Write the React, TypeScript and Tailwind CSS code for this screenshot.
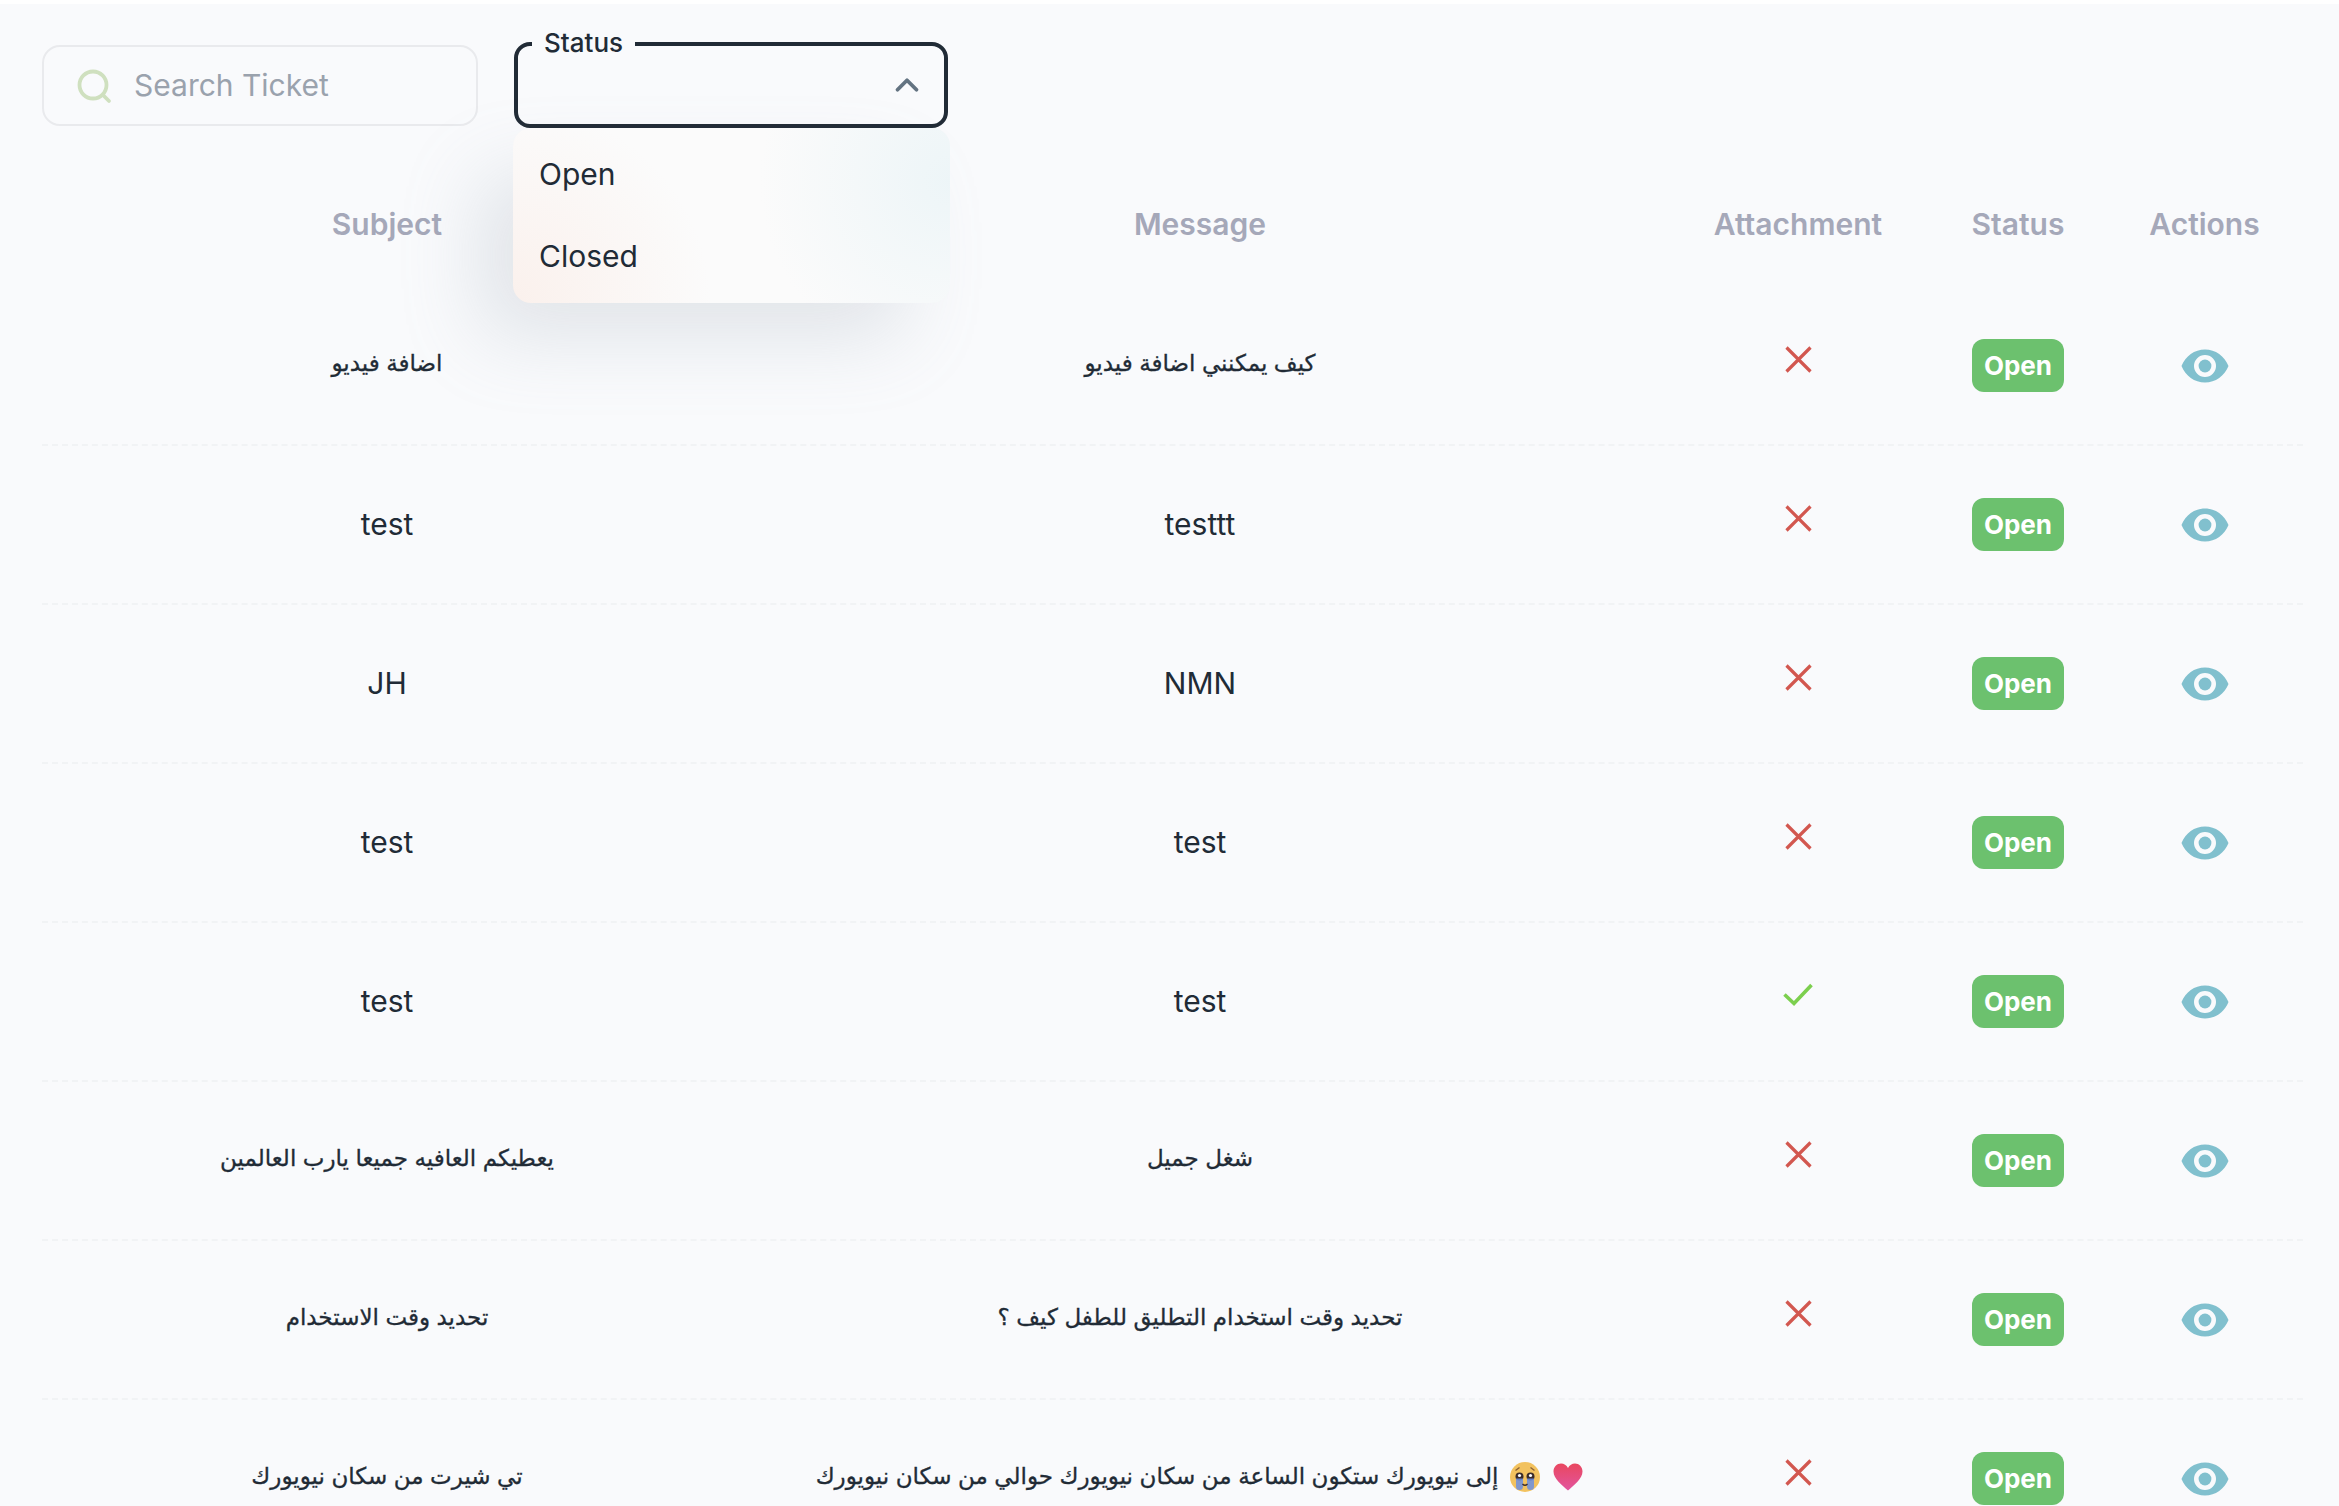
import { ChevronUp } from 'lucide-react'

type Ticket = {
  subject: string
  message: string
  attachment: boolean
  emoji?: boolean
}

const tickets: Ticket[] = [
  { subject: 'اضافة فيديو', message: 'كيف يمكنني اضافة فيديو', attachment: false },
  { subject: 'test', message: 'testtt', attachment: false },
  { subject: 'JH', message: 'NMN', attachment: false },
  { subject: 'test', message: 'test', attachment: false },
  { subject: 'test', message: 'test', attachment: true },
  { subject: 'يعطيكم العافيه جميعا يارب العالمين', message: 'شغل جميل', attachment: false },
  { subject: 'تحديد وقت الاستخدام', message: 'تحديد وقت استخدام التطليق للطفل كيف ؟', attachment: false },
  {
    subject: 'تي شيرت من سكان نيويورك',
    message: 'إلى نيويورك ستكون الساعة من سكان نيويورك حوالي من سكان نيويورك',
    attachment: false,
    emoji: true,
  },
]

// only DejaVu has arabic here and it runs wide, so arabic cells get a smaller size
const cellText = (text: string) =>
  /[\u0600-\u06FF]/.test(text)
    ? 'text-[23px] whitespace-nowrap -mt-[4px] [-webkit-text-stroke:0.3px_#212b36]'
    : 'text-[30px]'

function SearchIcon() {
  return (
    <svg width="36" height="36" viewBox="0 0 36 36" fill="none" className="shrink-0">
      <circle cx="17" cy="17" r="13.5" stroke="#cfe0bf" strokeWidth="3.8" />
      <path d="M27 27l6 6" stroke="#cfe0bf" strokeWidth="3.8" strokeLinecap="round" />
    </svg>
  )
}

function CrossIcon() {
  return (
    <svg width="27" height="27" viewBox="0 0 27 27" fill="none">
      <path d="M1.5 1.5l24 24M25.5 1.5l-24 24" stroke="#d2574f" strokeWidth="3.2" />
    </svg>
  )
}

function CheckIcon() {
  return (
    <svg width="30" height="24" viewBox="0 0 30 24" fill="none">
      <path d="M1.5 11.5l9.5 9L28.5 2" stroke="#7ccf4e" strokeWidth="3.6" />
    </svg>
  )
}

function EyeIcon() {
  return (
    <svg width="48" height="34" viewBox="0 0 48 34">
      <path
        fillRule="evenodd"
        fill="#81c0ce"
        d="M0.5 17C4.5 7 13.5 0.5 24 0.5S43.5 7 47.5 17C43.5 27 34.5 33.5 24 33.5S4.5 27 0.5 17ZM24 6a11 11 0 1 0 0 22a11 11 0 0 0 0-22Z"
      />
      <circle cx="24" cy="17" r="6.4" fill="#81c0ce" />
    </svg>
  )
}

function HeartEmoji() {
  return (
    <svg width="30" height="28" viewBox="0 0 30 28" className="inline-block align-[-7px] mx-[1px]">
      <defs>
        <linearGradient id="heartFill" x1="0" y1="0" x2="0" y2="1">
          <stop offset="0" stopColor="#e9475f" />
          <stop offset="1" stopColor="#e2559f" />
        </linearGradient>
      </defs>
      <path
        fill="url(#heartFill)"
        d="M15 27.5C9 22 0.5 16 0.5 8.500C0.500 3.800 4 0.500 8 0.500C11 0.500 13.500 2 15 5C16.500 2 19 0.500 22 0.500C26 0.500 29.500 3.800 29.500 8.500C29.500 16 21 22 15 27.5Z"
      />
    </svg>
  )
}

function CryingFaceEmoji() {
  return (
    <svg width="30" height="30" viewBox="0 0 30 30" className="inline-block align-[-8px] mx-[12px]">
      <circle cx="15" cy="15" r="15" fill="#f2c25f" />
      <circle cx="9.500" cy="14.500" r="4" fill="#3a2c2a" />
      <circle cx="20.500" cy="14.500" r="4" fill="#3a2c2a" />
      <circle cx="9.500" cy="13.500" r="1.600" fill="#fff" />
      <circle cx="20.500" cy="13.500" r="1.600" fill="#fff" />
      <path d="M6 16.500h7v8a3.500 3.500 0 0 1-7 0ZM17 16.500h7v8a3.500 3.500 0 0 1-7 0Z" fill="#6c8fe0" opacity="0.85" />
      <path d="M12.500 22c1.500 1.500 3.500 1.500 5 0" stroke="#3a2c2a" strokeWidth="1.400" fill="none" />
      <path d="M5.500 8.500l4-3M24.500 8.500l-4-3" stroke="#8c6239" strokeWidth="1.400" fill="none" />
    </svg>
  )
}

function TicketRow({ ticket }: { ticket: Ticket }) {
  return (
    <div className="grid grid-cols-[690px_936px_260px_180px_193px] h-[159px] items-center text-center border-b-2 border-dashed border-[#f1f3f5] text-[#212b36]">
      <div dir="auto" className={cellText(ticket.subject)}>{ticket.subject}</div>
      <div dir={ticket.emoji ? 'rtl' : 'auto'} className={cellText(ticket.message)}>
        {ticket.emoji && (
          <>
            <HeartEmoji />
            <CryingFaceEmoji />
          </>
        )}
        {ticket.message}
      </div>
      <div className="flex justify-center mb-[13px]">
        {ticket.attachment ? <CheckIcon /> : <CrossIcon />}
      </div>
      <div className="flex justify-center">
        <span className="w-[92px] h-[53px] rounded-[12px] bg-[#6cc16e] text-white text-[26px] font-bold flex items-center justify-center">
          Open
        </span>
      </div>
      <div className="flex justify-center">
        <EyeIcon />
      </div>
    </div>
  )
}

export default function App() {
  return (
    <div className="h-[1506px] overflow-hidden bg-white pt-[4px] font-['Inter','Liberation_Sans','DejaVu_Sans',sans-serif]">
      <div className="h-full bg-[#f9fafc] pl-[42px] pr-[36px] pt-[38px]">
        {/* Filters */}
        <div className="flex items-start gap-[36px] h-[86px]">
          <div className="w-[436px] h-[81px] mt-[3px] flex items-center gap-[22px] px-[32px] rounded-[18px] border-2 border-[#e9eaed]">
            <SearchIcon />
            <span className="text-[30px] text-[#9aa2ad]">Search Ticket</span>
          </div>

          <div className="relative w-[434px] h-[86px] rounded-[16px] border-4 border-[#212b36] flex items-center justify-end pr-[18px]">
            <span className="absolute -top-[19px] left-[14px] px-[12px] bg-[#f9fafc] text-[26px] leading-[32px] font-medium text-[#212b36]">
              Status
            </span>
            <ChevronUp size={38} strokeWidth={2.4} className="text-[#637381]" />

            {/* Open dropdown */}
            <div className="absolute top-[82px] -left-[5px] w-[437px] h-[175px] pt-[5px] rounded-[18px] z-10 bg-[#fbfbfb] bg-[radial-gradient(circle_at_100%_30%,rgba(220,238,243,0.45),transparent_42%),radial-gradient(circle_at_0%_100%,rgba(250,232,224,0.55),transparent_42%)] shadow-[-40px_40px_80px_-8px_rgba(145,158,171,0.24)]">
              <div className="h-[82px] flex items-center px-[26px] text-[30px] text-[#212b36]">Open</div>
              <div className="h-[82px] flex items-center px-[26px] text-[30px] text-[#212b36]">Closed</div>
            </div>
          </div>
        </div>

        {/* Table header */}
        <div className="grid grid-cols-[690px_936px_260px_180px_193px] mt-[34px] h-[125px] items-center text-center text-[30px] font-semibold text-[#a5a8b9]">
          <div>Subject</div>
          <div>Message</div>
          <div>Attachment</div>
          <div>Status</div>
          <div>Actions</div>
        </div>

        {tickets.map((ticket, i) => (
          <TicketRow key={i} ticket={ticket} />
        ))}
      </div>
    </div>
  )
}
